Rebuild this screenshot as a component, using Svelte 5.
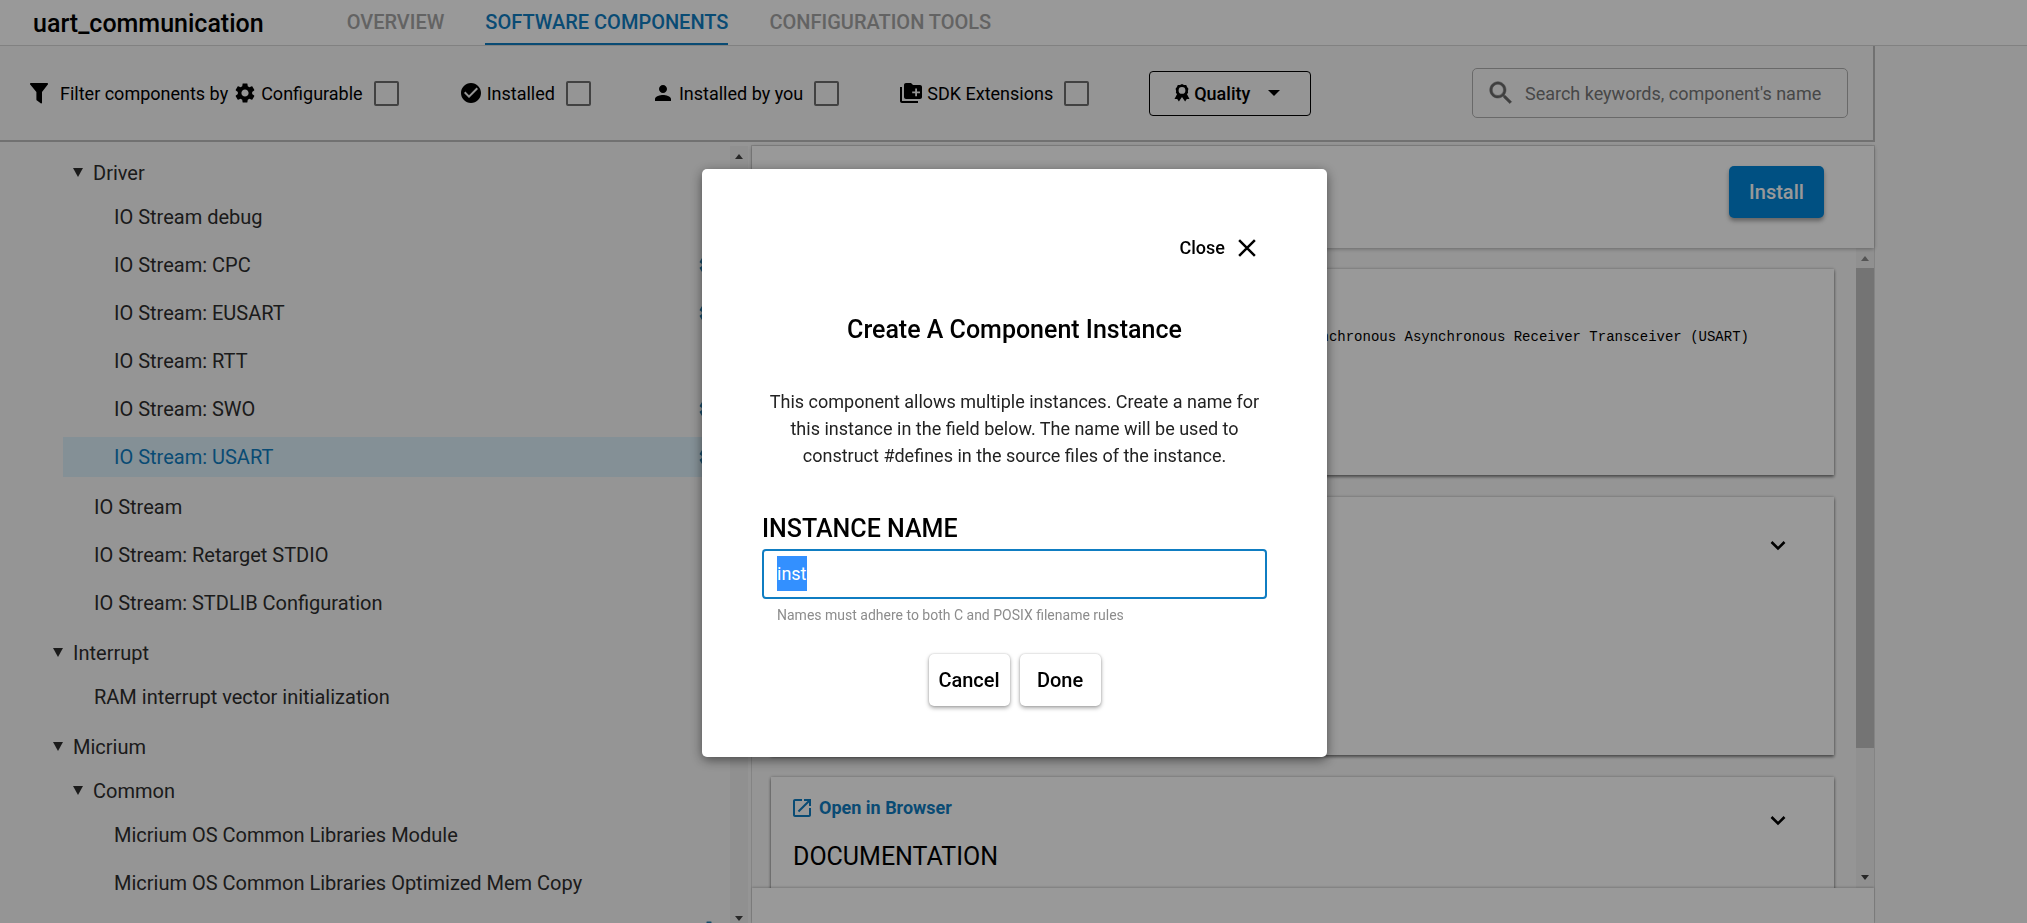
<script>
  import { onMount } from 'svelte';

  const defaultName = 'inst';

  let nameInput;
  let instanceName = $state(defaultName);

  const tabs = [
    { label: 'OVERVIEW' },
    { label: 'SOFTWARE COMPONENTS', active: true },
    { label: 'CONFIGURATION TOOLS' }
  ];

  const filters = [
    { id: 'configurable', label: 'Configurable' },
    { id: 'installed', label: 'Installed' },
    { id: 'person', label: 'Installed by you' },
    { id: 'sdk', label: 'SDK Extensions' }
  ];

  const tree = [
    { kind: 'folder', level: 2, label: 'Driver' },
    {
      kind: 'leaves',
      level: 2,
      items: [
        { label: 'IO Stream debug' },
        { label: 'IO Stream: CPC', gear: true },
        { label: 'IO Stream: EUSART', gear: true },
        { label: 'IO Stream: RTT' },
        { label: 'IO Stream: SWO', gear: true },
        { label: 'IO Stream: USART', gear: true, selected: true }
      ]
    },
    {
      kind: 'leaves',
      level: 1,
      items: [
        { label: 'IO Stream' },
        { label: 'IO Stream: Retarget STDIO' },
        { label: 'IO Stream: STDLIB Configuration' }
      ]
    },
    { kind: 'folder', level: 1, label: 'Interrupt' },
    { kind: 'leaves', level: 1, items: [{ label: 'RAM interrupt vector initialization' }] },
    { kind: 'folder', level: 1, label: 'Micrium' },
    { kind: 'folder', level: 2, label: 'Common' },
    {
      kind: 'leaves',
      level: 2,
      items: [
        { label: 'Micrium OS Common Libraries Module' },
        { label: 'Micrium OS Common Libraries Optimized Mem Copy' },
        { label: '', gear: true }
      ]
    }
  ];

  onMount(() => {
    nameInput.focus();
    nameInput.select();
  });
</script>

{#snippet gear()}
  <svg viewBox="0 0 24 24" aria-hidden="true"><path fill="currentColor" d="M19.14 12.94c.04-.3.06-.61.06-.94 0-.32-.02-.64-.07-.94l2.03-1.58c.18-.14.23-.41.12-.61l-1.92-3.32c-.12-.22-.37-.29-.59-.22l-2.39.96c-.5-.38-1.03-.7-1.62-.94l-.36-2.54c-.04-.24-.24-.41-.48-.41h-3.84c-.24 0-.43.17-.47.41l-.36 2.54c-.59.24-1.13.57-1.62.94l-2.39-.96c-.22-.08-.47 0-.59.22L2.74 8.87c-.12.21-.08.47.12.61l2.03 1.58c-.05.3-.09.63-.09.94s.02.64.07.94l-2.03 1.58c-.18.14-.23.41-.12.61l1.92 3.32c.12.22.37.29.59.22l2.39-.96c.5.38 1.03.7 1.62.94l.36 2.54c.05.24.24.41.48.41h3.84c.24 0 .44-.17.47-.41l.36-2.54c.59-.24 1.13-.56 1.62-.94l2.39.96c.22.08.47 0 .59-.22l1.92-3.32c.12-.22.07-.47-.12-.61l-2.01-1.58zM12 15.6c-1.98 0-3.6-1.62-3.6-3.6s1.62-3.6 3.6-3.6 3.6 1.62 3.6 3.6-1.62 3.6-3.6 3.6z" /></svg>
{/snippet}

{#snippet chevron()}
  <button class="expand" type="button" aria-label="Expand section">
    <svg viewBox="0 0 24 24"><path d="M5.5 9l6.5 6.5L18.500 9" fill="none" stroke="currentColor" stroke-width="2.600" /></svg>
  </button>
{/snippet}

{#snippet scrollbar(thumb)}
  <div class="scrollbar" aria-hidden="true">
    <svg class:dim={thumb} viewBox="0 0 18 20"><path d="M5 13l4-5 4 5z" fill="currentColor" /></svg>
    <div class="track">{#if thumb}<div class="thumb"></div>{/if}</div>
    <svg viewBox="0 0 18 20"><path d="M5 7l4 5 4-5z" fill="currentColor" /></svg>
  </div>
{/snippet}

<div class="page">
  <header>
    <h1>uart_communication</h1>
    <nav>
      {#each tabs as tab}
        <a href="#tab" class:active={tab.active}>{tab.label}</a>
      {/each}
    </nav>
  </header>

  <div class="workspace">
    <section class="filters">
      <svg class="funnel" viewBox="0 0 18 21" aria-hidden="true"><path fill="currentColor" d="M.8 0h16.400c.8 0 1.100.9.600 1.500L12 9v10.700c0 .7-.7 1-1.300.6L7 17.500c-.4-.3-.6-.6-.6-1.100V9L.2 1.500C-.3.9 0 0 .8 0z" /></svg>
      <span class="lead">Filter components by</span>
      <div class="filter-list">
        {#each filters as f}
          <div class="filter">
            <label for={f.id}>
              {#if f.id === 'configurable'}
                {@render gear()}
              {:else if f.id === 'installed'}
                <svg viewBox="0 0 24 24"><path fill="currentColor" d="M12 2C6.480 2 2 6.480 2 12s4.480 10 10 10 10-4.480 10-10S17.520 2 12 2zm-2 15l-5-5 1.410-1.410L10 14.170l7.590-7.590L19 8l-9 9z" /></svg>
              {:else if f.id === 'person'}
                <svg viewBox="0 0 24 24"><path fill="currentColor" d="M12 12c2.210 0 4-1.790 4-4s-1.790-4-4-4-4 1.790-4 4 1.790 4 4 4zm0 2c-2.670 0-8 1.340-8 4v2h16v-2c0-2.660-5.330-4-8-4z" /></svg>
              {:else}
                <svg viewBox="0 0 24 24"><path fill="currentColor" d="M1 6h2v14h16v2H3c-1.100 0-2-.9-2-2V6z" /><path fill="currentColor" fill-rule="evenodd" d="M7 2h5l2 2h7c1.100 0 2 .9 2 2v10c0 1.100-.9 2-2 2H7c-1.100 0-2-.9-2-2V4c0-1.100.9-2 2-2zm9.200 5.500v3h-3v1.800h3v3H18v-3h3v-1.800h-3v-3z" /></svg>
              {/if}
              {f.label}
            </label>
            <input type="checkbox" id={f.id} />
          </div>
        {/each}
      </div>
      <button class="quality" type="button">
        <svg class="award" viewBox="0 0 16 18" aria-hidden="true">
          <path fill="currentColor" fill-rule="evenodd" d="M8 0l2 .9 2.200.2.900 2 1.300 1.700-.5 2.100.2 2.100-1.200 1 2.600 5-2.700-.1-1.700 2.600L8 13l-3.100 4.500-1.700-2.600-2.700.1 2.600-5-1.200-1 .2-2.100-.5-2.100 1.300-1.700.900-2L6 .9zM8 3a3.400 3.400 0 100 6.800A3.400 3.400 0 008 3z" />
        </svg>
        <span>Quality</span>
        <svg class="caret" viewBox="0 0 12 6" aria-hidden="true"><path d="M0 0h12L6 6z" fill="currentColor" /></svg>
      </button>
      <div class="search">
        <svg viewBox="0 0 24 24" aria-hidden="true"><path fill="currentColor" stroke="currentColor" stroke-width=".4" d="M15.500 14h-.79l-.28-.27C15.410 12.590 16 11.110 16 9.500 16 5.910 13.090 3 9.500 3S3 5.910 3 9.500 5.910 16 9.500 16c1.610 0 3.090-.59 4.230-1.570l.27.28v.79l5 4.990L20.490 19l-4.990-5zm-6 0C7.010 14 5 11.990 5 9.500S7.010 5 9.500 5 14 7.010 14 9.500 11.990 14 9.500 14z" /></svg>
        <input type="text" aria-label="Search" placeholder="Search keywords, component's name" />
      </div>
    </section>

    <main>
      <aside>
        <div class="tree">
          {#each tree as node}
            {#if node.kind === 'folder'}
              <button type="button" class="folder" class:deep={node.level === 2}>
                <svg viewBox="0 0 10 10" aria-hidden="true"><path d="M0 0h10L5 9z" fill="currentColor" /></svg>
                {node.label}
              </button>
            {:else}
              <ul class:deep={node.level === 2}>
                {#each node.items as item}
                  <li class:selected={item.selected}>
                    <span>{item.label}</span>
                    {#if item.gear}{@render gear()}{/if}
                  </li>
                {/each}
              </ul>
            {/if}
          {/each}
        </div>
        {@render scrollbar(false)}
      </aside>

      <section class="detail">
        <div class="detail-head">
          <button class="install" type="button">Install</button>
        </div>
        <div class="detail-body">
          <div class="cards">
            <article class="card description">
              <code>Universal Synchronous Asynchronous Receiver Transceiver (USART)</code>
            </article>
            <article class="card middle">
              {@render chevron()}
            </article>
            <article class="card docs">
              <div>
                <a href="#docs">
                  <svg viewBox="0 0 18 18" aria-hidden="true"><path fill="currentColor" d="M16 16H2V2h7V0H2C.9 0 0 .9 0 2v14c0 1.100.9 2 2 2h14c1.100 0 2-.9 2-2V9h-2v7zM11 0v2h3.590l-9.830 9.830 1.410 1.410L16 3.410V7h2V0h-7z" /></svg>
                  Open in Browser
                </a>
                <h2>DOCUMENTATION</h2>
              </div>
              {@render chevron()}
            </article>
          </div>
          {@render scrollbar(true)}
        </div>
        <footer></footer>
      </section>
    </main>
  </div>
</div>

<div class="overlay">
  <div class="dialog" role="dialog" aria-modal="true" aria-labelledby="dialog-title">
    <button class="close" type="button">
      Close
      <svg viewBox="0 0 16 16" aria-hidden="true"><path d="M1 1l14 14M15 1L1 15" fill="none" stroke="currentColor" stroke-width="2.200" /></svg>
    </button>
    <h2 id="dialog-title">Create A Component Instance</h2>
    <p>This component allows multiple instances. Create a name for this instance in the field below. The name will be used to construct #defines in the source files of the instance.</p>
    <label for="instance-name">INSTANCE NAME</label>
    <input
      id="instance-name"
      type="text"
      class:preselected={instanceName === defaultName}
      bind:this={nameInput}
      bind:value={instanceName}
    />
    <small>Names must adhere to both C and POSIX filename rules</small>
    <div class="actions">
      <button type="button">Cancel</button>
      <button type="button">Done</button>
    </div>
  </div>
</div>

<style>
  :global(body) {
    margin: 0;
    background: #f9f9f9;
  }

  .page,
  .overlay {
    font-family: Roboto, 'Liberation Sans', sans-serif;
    color: #000;
    box-sizing: border-box;
  }

  .page *,
  .overlay * {
    box-sizing: border-box;
  }

  button,
  input {
    font: inherit;
    color: inherit;
  }

  button {
    cursor: pointer;
  }

  .page {
    display: flex;
    flex-direction: column;
    height: 100vh;
    overflow: hidden;
    font-size: 18px;
  }

  header {
    display: flex;
    align-items: stretch;
    gap: 83px;
    flex: none;
    height: 46px;
    padding-left: 33px;
    background: #fff;
    border-bottom: 1px solid #d8d8d8;
  }

  h1 {
    margin: 0;
    padding-top: 2px;
    font-size: 25px;
    font-weight: 500;
    line-height: 43px;
  }

  nav {
    display: flex;
    gap: 41px;
  }

  nav a {
    padding-top: 2px;
    font-size: 20px;
    font-weight: 500;
    line-height: 41px;
    color: #a6a6a6;
    text-decoration: none;
    border-bottom: 2px solid transparent;
  }

  nav a.active {
    color: #0f7dc2;
    border-color: #0f7dc2;
  }

  .workspace {
    display: flex;
    flex-direction: column;
    flex: 1;
    min-height: 0;
    width: 92.5%;
  }

  .filters {
    display: flex;
    align-items: center;
    flex: none;
    height: 96px;
    padding: 0 25px 0 30px;
    border: solid #bcbcbc;
    border-width: 0 2px 2px 0;
  }

  .funnel {
    width: 18px;
    height: 21px;
  }

  .lead {
    margin: 0 5px 0 12px;
  }

  .filter-list {
    display: flex;
    gap: 60px;
  }

  .filter,
  .filter label {
    display: flex;
    align-items: center;
  }

  .filter {
    gap: 11px;
  }

  .filter label {
    gap: 4px;
  }

  .filter svg {
    width: 24px;
    height: 24px;
  }

  .filter input {
    appearance: none;
    width: 25px;
    height: 25px;
    margin: 0;
    border: 2px solid #6e6e6e;
    border-radius: 2px;
  }

  .quality {
    display: flex;
    align-items: center;
    gap: 4px;
    width: 162px;
    height: 45px;
    margin-left: 60px;
    padding: 0 24px;
    font-weight: 500;
    background: none;
    border: 1px solid #000;
    border-radius: 4px;
  }

  .award {
    width: 16px;
    height: 18px;
  }

  .caret {
    width: 12px;
    height: 6px;
    margin-left: 14px;
  }

  .search {
    display: flex;
    align-items: center;
    gap: 9px;
    width: 376px;
    height: 50px;
    margin-left: auto;
    padding: 0 13px;
    color: #6a6a6a;
    border: 1px solid #b0b0b0;
    border-radius: 5px;
  }

  .search svg {
    flex: none;
    width: 30px;
    height: 30px;
  }

  .search input {
    flex: 1;
    min-width: 0;
    padding: 0;
    background: none;
    border: 0;
    outline: 0;
  }

  .search input::placeholder {
    color: #777;
    opacity: 1;
  }

  main {
    display: grid;
    grid-template-columns: 2fr 3fr;
    flex: 1;
    min-height: 0;
  }

  aside {
    display: flex;
    min-height: 0;
    overflow: hidden;
    margin-bottom: -6px;
    padding: 4px 2px 0 0;
  }

  .tree {
    flex: 1;
    padding: 7px 0 0 43px;
    overflow: hidden;
    font-size: 20px;
    color: #2e2e2e;
  }

  .folder {
    display: flex;
    align-items: center;
    gap: 10px;
    height: 40px;
    margin: 0 0 4px 10px;
    padding: 0;
    background: none;
    border: 0;
  }

  .folder.deep {
    margin-left: 30px;
  }

  .folder svg {
    width: 10px;
    height: 10px;
  }

  ul {
    display: flex;
    flex-direction: column;
    gap: 8px;
    margin: 0 0 10px;
    padding: 0;
    list-style: none;
  }

  ul.deep {
    margin-left: 20px;
  }

  li {
    display: flex;
    align-items: center;
    justify-content: space-between;
    height: 40px;
    padding: 0 9px 0 51px;
  }

  li.selected {
    color: #0f7dc2;
    background: #dcf0fa;
  }

  li svg {
    width: 24px;
    height: 24px;
    color: #2a7fae;
  }

  .scrollbar {
    display: flex;
    flex-direction: column;
    flex: none;
    width: 18px;
    color: #444;
    background: #f1f1f1;
  }

  .scrollbar svg {
    width: 18px;
    height: 20px;
  }

  .scrollbar .dim {
    color: #8c8c8c;
  }

  .track {
    flex: 1;
  }

  .thumb {
    height: 80%;
    background: #c1c1c1;
  }

  .detail {
    display: flex;
    flex-direction: column;
    min-width: 0;
    min-height: 0;
    margin: 3px 0 0 1px;
    border: solid #dcdcdc;
    border-width: 1px 1px 0;
  }

  .detail-head {
    position: relative;
    display: flex;
    align-items: flex-start;
    justify-content: flex-end;
    flex: none;
    height: 102px;
    padding: 20px 50px 0;
    background: #fff;
    box-shadow: 0 1px 4px rgba(0, 0, 0, 0.3);
  }

  .install {
    width: 95px;
    height: 52px;
    padding: 0;
    font-size: 20px;
    font-weight: 500;
    color: #fff;
    background: #0086d9;
    border: 0;
    border-radius: 5px;
    box-shadow: 0 3px 4px rgba(0, 0, 0, 0.35);
  }

  .detail-body {
    display: flex;
    flex: 1;
    min-height: 0;
    overflow: hidden;
  }

  .cards {
    display: flex;
    flex-direction: column;
    gap: 22px;
    flex: 1;
    min-width: 0;
    padding: 21px 22px 0 19px;
  }

  .card {
    display: flex;
    justify-content: flex-end;
    flex: none;
    background: #fff;
    box-shadow: 0 2px 3px rgba(0, 0, 0, 0.45), 0 0 3px rgba(0, 0, 0, 0.25);
  }

  .description {
    height: 206px;
    padding: 59px 85px 0;
  }

  code {
    font-family: 'Liberation Mono', monospace;
    font-size: 14px;
    line-height: 18px;
    white-space: nowrap;
  }

  .middle {
    height: 258px;
    padding: 36px 44px 0;
  }

  .docs {
    justify-content: space-between;
    height: 258px;
    padding: 19px 44px 0 22px;
  }

  .docs .expand {
    margin-top: 12px;
  }

  .docs a {
    display: flex;
    align-items: center;
    gap: 8px;
    line-height: 24px;
    font-weight: 700;
    color: #0f7dc2;
    text-decoration: none;
  }

  .docs a svg {
    width: 18px;
    height: 18px;
  }

  .docs h2 {
    margin: 21px 0 0;
    font-size: 25px;
    font-weight: 400;
    line-height: 32px;
  }

  .expand {
    width: 24px;
    height: 24px;
    padding: 0;
    background: none;
    border: 0;
  }

  .expand svg {
    display: block;
  }

  footer {
    position: relative;
    flex: none;
    height: 35px;
    background: #fff;
    box-shadow: 0 -1px 2px rgba(0, 0, 0, 0.2);
  }

  .overlay {
    position: fixed;
    inset: 0;
    display: flex;
    align-items: center;
    justify-content: center;
    padding-left: 2px;
    padding-top: 2px;
    background: rgba(0, 0, 0, 0.4);
  }

  .dialog {
    display: flex;
    flex-direction: column;
    width: 625px;
    max-width: 100%;
    padding: 63px 60px 51px;
    font-size: 18px;
    background: #fff;
    border-radius: 5px;
    box-shadow: 0 3px 12px rgba(0, 0, 0, 0.5);
  }

  .close {
    display: flex;
    align-items: center;
    align-self: flex-end;
    gap: 13px;
    height: 32px;
    margin-right: 11px;
    padding: 0;
    font-weight: 500;
    background: none;
    border: 0;
  }

  .close svg {
    width: 18px;
    height: 18px;
  }

  .dialog h2 {
    margin: 50px 0 0;
    font-size: 25px;
    font-weight: 500;
    line-height: 32px;
    text-align: center;
  }

  .dialog p {
    margin: 42px 5px 0;
    line-height: 27px;
    text-align: center;
    color: #222;
  }

  .dialog label {
    margin-top: 44px;
    font-size: 25px;
    font-weight: 500;
    line-height: 32px;
  }

  .dialog input {
    width: 100%;
    height: 50px;
    margin-top: 4px;
    padding: 0 13px;
    border: 2px solid #0f7dc2;
    border-radius: 4px;
    outline: 0;
  }

  .dialog input.preselected {
    background: linear-gradient(#3390ff, #3390ff) 0 center / 30px 35px no-repeat content-box;
  }

  .dialog input::selection {
    color: #fff;
    background: #3390ff;
  }

  .dialog small {
    margin: 6px 15px 0;
    font-size: 14px;
    line-height: 20px;
    color: #8c8c8c;
  }

  .actions {
    display: flex;
    justify-content: center;
    gap: 10px;
    margin-top: 29px;
  }

  .actions button {
    min-width: 81px;
    height: 52px;
    padding: 0 8px;
    font-size: 20px;
    font-weight: 500;
    background: #fff;
    border: 0;
    border-radius: 5px;
    box-shadow: 0 2px 4px rgba(0, 0, 0, 0.35), 0 0 2px rgba(0, 0, 0, 0.2);
  }
</style>
